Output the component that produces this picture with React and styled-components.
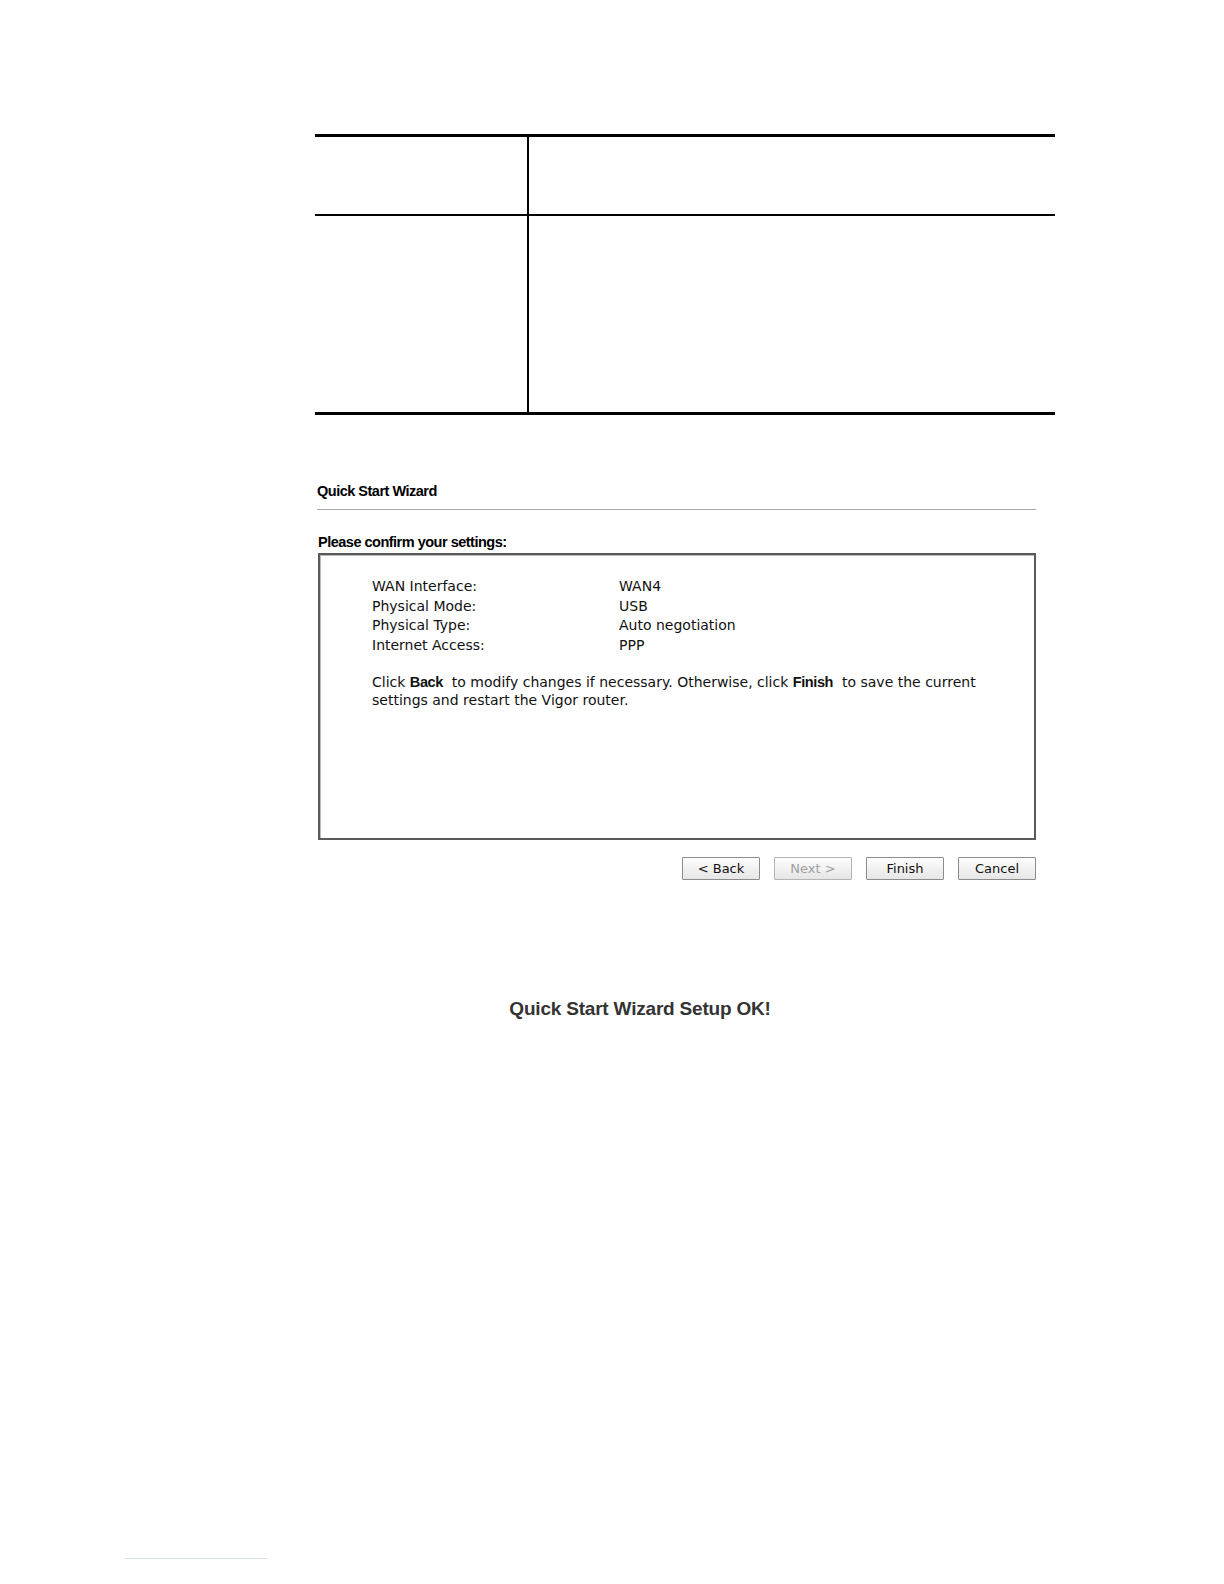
import React from "react";
import styled, { createGlobalStyle } from "styled-components";

const Global = createGlobalStyle`
  html, body { margin: 0; padding: 0; background: #fff; overflow: hidden; }
  body { font-family: "Liberation Sans", Arial, sans-serif; color: #000; }
`;

const Page = styled.div`
  width: 1224px;
  height: 1584px;
  position: relative;
  display: flex;
  flex-direction: column;
`;

const DocTable = styled.div`
  margin: 134px 0 0 315px;
  width: 740px;
  border-top: 3px solid #000;
  border-bottom: 3px solid #000;
  display: grid;
  grid-template-columns: 212px 1fr;
`;

const Cell = styled.div`
  height: ${(p) => p.$h}px;
  border-left: ${(p) => (p.$right ? "2px solid #000" : "none")};
  border-bottom: ${(p) => (p.$divider ? "2px solid #000" : "none")};
`;

const Wizard = styled.div`
  margin: 67px 0 0 317px;
  width: 719px;
  display: flex;
  flex-direction: column;
`;

const Title = styled.div`
  font-size: 14.5px;
  font-weight: bold;
  letter-spacing: -0.5px;
  line-height: 18px;
  padding-bottom: 9px;
  border-bottom: 1px solid #a8a8a8;
`;

const SubTitle = styled.div`
  margin: 23px 0 2px 1px;
  font-size: 14.5px;
  font-weight: bold;
  letter-spacing: -0.5px;
  line-height: 18px;
`;

const Box = styled.div`
  box-sizing: border-box;
  margin-left: 1px;
  height: 287px;
  border: 2px solid #5a5a5a;
  box-shadow: inset 1px 1px 0 #bbb;
  padding: 22px 0 0 52px;
  font-family: "DejaVu Sans", Tahoma, sans-serif;
  font-size: 14px;
  color: #111;
`;

const Info = styled.div`
  display: grid;
  grid-template-columns: 247px 1fr;
  line-height: 19.5px;
`;

const Para = styled.p`
  margin: 19px 0 0 0;
  line-height: 17.5px;
  width: 630px;
  b { font-family: "Liberation Sans", Arial, sans-serif; font-size: 14.5px; letter-spacing: -0.4px; line-height: 17.5px; }
`;

const Buttons = styled.div`
  margin-top: 17px;
  display: flex;
  justify-content: flex-end;
  gap: 14px;
`;

const Button = styled.button`
  width: 78px;
  height: 23px;
  padding: 0;
  border: 1px solid ${(p) => (p.disabled ? "#b4b4b4" : "#8c8c8c")};
  border-radius: 1px;
  background: linear-gradient(#fdfdfd, #e6e6e6);
  font-family: "DejaVu Sans", Tahoma, sans-serif;
  font-size: 13px;
  color: ${(p) => (p.disabled ? "#a0a0a0" : "#111")};
`;

const Done = styled.div`
  margin: 118px 0 0 56px;
  width: 1168px;
  text-align: center;
  font-size: 19px;
  font-weight: bold;
  letter-spacing: -0.2px;
  color: #333;
`;

const FootRule = styled.div`
  position: absolute;
  left: 125px;
  top: 1558px;
  width: 142px;
  height: 1px;
  background: #d8def0;
`;

const rows = [
  ["WAN Interface:", "WAN4"],
  ["Physical Mode:", "USB"],
  ["Physical Type:", "Auto negotiation"],
  ["Internet Access:", "PPP"],
];

export default function App() {
  return (
    <Page>
      <Global />
      <DocTable>
        <Cell $h={77} $divider />
        <Cell $h={77} $right $divider />
        <Cell $h={196} />
        <Cell $h={196} $right />
      </DocTable>
      <Wizard>
        <Title>Quick Start Wizard</Title>
        <SubTitle>Please confirm your settings:</SubTitle>
        <Box>
          <Info>
            {rows.map(([k, v]) => (
              <React.Fragment key={k}>
                <span>{k}</span>
                <span>{v}</span>
              </React.Fragment>
            ))}
          </Info>
          <Para>
            Click <b>Back</b>&nbsp; to modify changes if necessary. Otherwise, click <b>Finish</b>&nbsp; to save the current settings and restart the Vigor router.
          </Para>
        </Box>
        <Buttons>
          <Button>&lt; Back</Button>
          <Button disabled>Next &gt;</Button>
          <Button>Finish</Button>
          <Button>Cancel</Button>
        </Buttons>
      </Wizard>
      <Done>Quick Start Wizard Setup OK!</Done>
      <FootRule />
    </Page>
  );
}
